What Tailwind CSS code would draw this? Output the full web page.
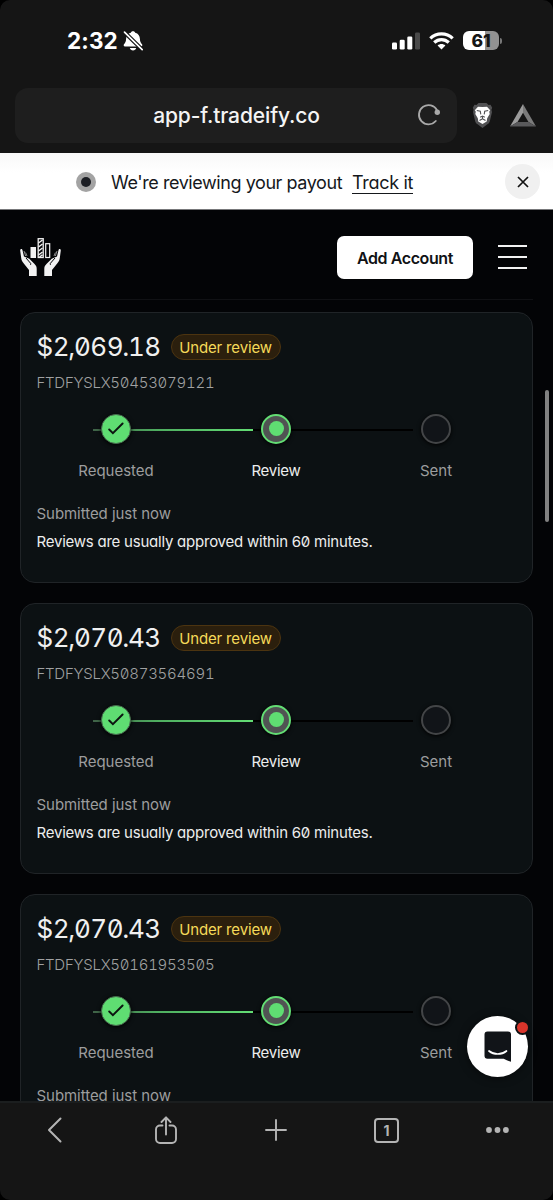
<!DOCTYPE html>
<html lang="en">
<head>
<meta charset="utf-8">
<title>Payouts</title>
<script src="https://cdn.jsdelivr.net/npm/@tailwindcss/browser@4"></script>
</head>
<body class="bg-black">
<div class="w-[553px] h-[1200px] overflow-hidden rounded-[10px] bg-[#030406] flex flex-col relative font-[Inter,sans-serif] text-white whitespace-nowrap">

  <!-- Status bar -->
  <div class="h-[88px] shrink-0 bg-[#151515] flex items-start pt-[26px] pl-[67px] pr-[51px]">
    <span class="text-[22.500px] leading-[30px] font-bold tracking-[0.1px] w-[56px]">2:32</span>
    <svg class="mt-[4px]" width="21" height="22" viewBox="0 0 21 22">
      <path d="M10 1.200c1.300 0 2 .7 2.200 1.500 3 .8 4.600 3.100 4.700 6 .1 3 .9 4 2.100 5.600.8 1.100.1 2.200-.9 2.200H1.900c-1 0-1.700-1.100-.9-2.200 1.200-1.600 2-2.600 2.100-5.600.1-2.900 1.700-5.200 4.700-6C8 1.900 8.700 1.200 10 1.200Z" fill="#fff"/>
      <path d="M6.800 18h6.400c-.4 1.500-1.600 2.400-3.200 2.400S7.200 19.500 6.800 18Z" fill="#fff"/>
      <path d="M1.500 2.200 19.200 19.600" stroke="#151515" stroke-width="4"/>
      <path d="M1.500 2.200 19.200 19.600" stroke="#fff" stroke-width="1.700" stroke-linecap="round"/>
    </svg>
    <div class="ml-auto flex items-center gap-[9px] mt-[5px]">
      <svg width="28" height="18" viewBox="0 0 28 18">
        <rect x="0" y="10.500" width="5" height="7" rx="1.300" fill="#fff"/>
        <rect x="7.700" y="7.800" width="5" height="9.700" rx="1.300" fill="#fff"/>
        <rect x="15.300" y="4.500" width="5" height="13" rx="1.300" fill="#fff"/>
        <rect x="23" y=".5" width="5" height="17" rx="1.300" fill="#4a4a4a"/>
      </svg>
      <svg width="25" height="18" viewBox="0 0 25 18" fill="none" stroke="#fff" stroke-width="3.200">
        <path d="M1.300 6.300C7.500.4 17.500.4 23.700 6.300"/>
        <path d="M5.200 10.500c4.200-3.900 10.400-3.900 14.600 0"/>
        <path d="M12.500 17.600 8.600 13.600c2.200-2 5.600-2 7.800 0Z" fill="#fff" stroke="none"/>
      </svg>
      <div class="flex items-center">
        <div class="w-[36px] h-[19px] rounded-[6px] bg-[linear-gradient(90deg,#fff_61%,#929292_61%)] text-[#151515] text-[17.500px] leading-[19px] font-extrabold text-center tracking-[-0.2px]">61</div>
        <div class="w-[2px] h-[6px] ml-[1px] rounded-r-full bg-[#777]"></div>
      </div>
    </div>
  </div>

  <!-- Address bar -->
  <div class="h-[65px] shrink-0 bg-[#151515] flex items-start pl-[15px]">
    <div class="w-[442px] h-[55px] rounded-[13px] bg-[#1e1e1e] flex items-center relative">
      <span class="w-full text-center text-[21px] leading-[30px] mt-[1px] pl-[1px] font-medium tracking-[-0.12px] text-[#f4f4f4]">app-f.tradeify.co</span>
      <svg class="absolute left-[402px] top-[15px]" width="24" height="24" viewBox="0 0 24 24" fill="none">
        <path d="M20.100 7.300A9.600 9.600 0 1 0 18.800 18" stroke="#a9a9a9" stroke-width="1.800" stroke-linecap="round"/>
        <circle cx="20.300" cy="9.200" r="2.700" fill="#a9a9a9"/>
      </svg>
    </div>
    <svg class="ml-[15px] mt-[14px]" width="21" height="27" viewBox="0 0 21 27">
      <path d="M6.500 1h8l2 2 2-.3 1.700 3-.8 2 .6 2.200-2.100 9c-.4 1.500-1.200 2.500-2.500 3.400L10.500 26l-4.900-3.700c-1.300-.9-2.100-1.900-2.500-3.400L1 9.900l.6-2.200-.8-2 1.700-3 2 .3Z" fill="#515153"/>
      <path d="M6 4.800 10.500 5l4.500-.2 3.200 3.400-1 1.600.5 2.200-2.500 4.200-.5 3.300-4.200 2.600-4.200-2.600-.5-3.300-2.500-4.200.5-2.200-1-1.600Z" fill="#fff"/>
      <path d="m4.800 8.500 3.500.8.500 3M16.200 8.500l-3.500.8-.5 3M8.200 15.200l2.300-1.200 2.300 1.200M10.500 14.200v2.800M7.500 18.500l3-1.800 3 1.800" fill="none" stroke="#515153" stroke-width="1.100"/>
    </svg>
    <svg class="ml-[17px] mt-[16px]" width="26" height="23" viewBox="0 0 26 23">
      <path d="M13 0 0 22.500 7.500 18 13 8.800Z" fill="#9b9b9b"/>
      <path d="M13 0 26 22.500 18.500 18 13 8.800Z" fill="#7b7b7b"/>
      <path d="M0 22.500 7.500 18h11l7.500 4.500Z" fill="#59595b"/>
    </svg>
  </div>

  <!-- Payout banner -->
  <div class="h-[57px] shrink-0 bg-[linear-gradient(180deg,#f8f8f8,#fff_35%)] border-b border-[#77787a] text-[#15181c] flex items-center pl-[76px] pr-[13px]">
    <span class="size-[20px] rounded-full bg-[#a3a3a3] flex items-center justify-center mt-[1px]"><span class="size-[10px] rounded-full bg-[#1b1d23]"></span></span>
    <span class="ml-[15px] w-[231px] text-[18px] leading-[24px] mt-[3px] tracking-[-0.43px]">We're reviewing your payout</span>
    <span class="ml-[10px] text-[18px] leading-[21px] mt-[3px] border-b-[1.500px] border-[#15181c] tracking-[-0.3px]" style="font-feature-settings:'cv11'">Track it</span>
    <span class="ml-auto size-[35px] rounded-full bg-[#f0f0f0] flex items-center justify-center mt-[1px]">
      <svg width="12" height="12" viewBox="0 0 12 12" stroke="#111" stroke-width="1.700"><path d="m1 1 10 10M11 1 1 11"/></svg>
    </span>
  </div>

  <!-- App header -->
  <header class="h-[90px] shrink-0 mx-[20px] border-b border-[#101114] flex items-start pt-[26px]">
    <svg class="mt-[2px]" width="41" height="38" viewBox="0 0 41 38">
      <g fill="#f2f2f2">
        <rect x="10.500" y="9" width="5.500" height="11"/>
        <path d="M.2 12.500c0-2 2-2 2.300-.2L4 18.500l5.300 2.200 5 5c1.600 1.600 2.400 3 2.400 5V38H9v-6L3.800 25.500C2 23.500 1.500 22 1.200 20Z"/>
        <path d="M40.800 12.500c0-2-2-2-2.300-.2L37 18.500l-5.300 2.200-5 5c-1.600 1.600-2.400 3-2.400 5V38H32v-6l5.200-6.500c1.800-2 2.300-3.500 2.600-5.500Z"/>
      </g>
      <g fill="none" stroke="#f2f2f2">
        <rect x="18.200" y=".7" width="5" height="18.800" stroke-width="1.300"/>
        <rect x="25.700" y="5.700" width="4" height="13.800" stroke-width="1.200"/>
        <path d="m18.500 5 4-3M18.500 9l4-3M18.500 13l4-3M18.500 17l4-3M19.500 19l3-2.200" stroke-width="1.500"/>
        <path d="m4 13 1.700 5M5.600 14.500l1.400 3.500M37 13l-1.700 5M35.400 14.500 34 18" stroke-width=".9" stroke="#999"/>
      </g>
      <path d="m6 20 4.500 5.200c.6.8.4 1.600-.5 1.300M35 20l-4.500 5.200c-.6.8-.4 1.600.5 1.300" fill="none" stroke="#030406" stroke-width="1"/>
    </svg>
    <div class="ml-auto w-[136px] h-[43px] rounded-[7px] bg-white text-[#101215] text-[16px] leading-[44px] font-semibold text-center tracking-[-0.4px]" style="font-feature-settings:'cv11'">Add Account</div>
    <div class="ml-[25px] mt-[9px] mr-[6px] w-[29px] flex flex-col gap-[9px]">
      <span class="h-[2px] bg-[#f2f2f2]"></span><span class="h-[2px] bg-[#f2f2f2]"></span><span class="h-[2px] bg-[#f2f2f2]"></span>
    </div>
  </header>

  <!-- Payout cards -->
  <main id="cards" class="flex-1 min-h-0 overflow-hidden mx-[20px] pt-[12px] flex flex-col gap-[20px]"></main>

  <template id="card">
    <section class="h-[271px] shrink-0 rounded-[15px] border border-[#202427] bg-[#0c1113] pl-[15.500px] pt-[17px] flex flex-col items-start">
      <div class="flex items-center h-[34px]">
        <span class="w-[134px] text-[26px] leading-[34px] tracking-[-0.45px] text-[#f0f0f0]" style="font-feature-settings:'tnum','zero'" data-amount></span>
        <span class="w-[110px] h-[26px] rounded-full border border-[#4c3410] bg-[#2b1f0d] text-[#f5da59] text-[15px] leading-[26px] tracking-[-0.15px] text-center">Under review</span>
      </div>
      <div class="mt-[7px] text-[15px] leading-[24px] text-[#a0a1a2] font-light tracking-[-0.25px]" style="font-feature-settings:'tnum','zero'" data-id></div>
      <div class="relative mt-[18.500px] w-[480px] ml-[-0.500px]">
        <div class="absolute left-[57px] top-[15px] w-[320px] h-[2.500px] flex">
          <span class="w-1/2 bg-[linear-gradient(90deg,#3f6247,#4fae60_40%,#63dd74)]"></span>
          <span class="w-1/2 bg-black"></span>
        </div>
        <div class="relative grid grid-cols-3 text-center text-[15px] leading-[22px] text-[#9c9d9e]">
          <div class="flex flex-col items-center">
            <span class="size-[30px] rounded-full border-[1.500px] border-[#47684e] bg-[#5fdd72] shadow-[0_1px_4px_#000] flex items-center justify-center">
              <svg width="16" height="13" viewBox="0 0 16 13" fill="none" stroke="#0c1510" stroke-width="1.900" stroke-linecap="round"><path d="m1.200 7.500 3.700 3.700L14.600 1.500"/></svg>
            </span>
            <span class="mt-[16.500px]">Requested</span>
          </div>
          <div class="flex flex-col items-center">
            <span class="size-[30px] rounded-full border-2 border-[#63dd74] bg-[#505353] shadow-[0_1px_4px_#000] flex items-center justify-center"><span class="size-[15px] rounded-full bg-[#5fdd72]"></span></span>
            <span class="mt-[16.500px] text-[#eceded] tracking-[-0.25px]">Review</span>
          </div>
          <div class="flex flex-col items-center">
            <span class="size-[30px] rounded-full border-2 border-[#434547] bg-[#111418] shadow-[0_1px_4px_#000]"></span>
            <span class="mt-[16.500px]">Sent</span>
          </div>
        </div>
      </div>
      <div class="mt-[20px] text-[15px] leading-[24px] tracking-[-0.05px] text-[#9c9d9e]">Submitted just now</div>
      <div class="mt-[4px] text-[15px] leading-[24px] tracking-[-0.23px] text-[#eceded]" style="font-feature-settings:'cv11','zero'">Reviews are usually approved within 60 minutes.</div>
    </section>
  </template>

  <!-- Browser toolbar -->
  <footer class="h-[99px] shrink-0 bg-[#151515] border-t-2 border-[#1b1e1f]">
    <div class="flex items-center h-[54px] pl-[47px]">
      <svg width="16" height="26" viewBox="0 0 16 26" fill="none" stroke="#b4b4b4" stroke-width="2" stroke-linecap="round" stroke-linejoin="round"><path d="M13.500 1.500 2 13l11.500 11.500"/></svg>
      <svg class="ml-[92px]" width="22" height="28" viewBox="0 0 22 28" fill="none" stroke="#b4b4b4" stroke-width="1.900" stroke-linecap="round" stroke-linejoin="round"><path d="M7.500 9.500H5a4 4 0 0 0-4 4V23a4 4 0 0 0 4 4h12a4 4 0 0 0 4-4v-9.500a4 4 0 0 0-4-4h-2.500M11 18.500V1.500M6.500 6 11 1.300 15.500 6"/></svg>
      <svg class="ml-[88px]" width="22" height="22" viewBox="0 0 22 22" stroke="#b4b4b4" stroke-width="1.900" stroke-linecap="round"><path d="M11 1v20M1 11h20"/></svg>
      <span class="ml-[87px] size-[25px] rounded-[4px] border-2 border-[#b4b4b4] text-[#b4b4b4] text-[14px] leading-[21px] font-bold text-center">1</span>
      <svg class="ml-[87px]" width="23" height="6" viewBox="0 0 23 6" fill="#b4b4b4"><circle cx="3" cy="3" r="2.900"/><circle cx="11.500" cy="3" r="2.900"/><circle cx="19.900" cy="3" r="2.900"/></svg>
    </div>
  </footer>

  <!-- Scroll thumb -->
  <div class="absolute left-[545px] top-[390px] w-[4px] h-[132px] rounded-full bg-[#818181]"></div>

  <!-- Chat launcher -->
  <div class="absolute left-[467px] top-[1016px] size-[61px] rounded-full bg-white shadow-[0_1px_8px_#0008]">
    <svg class="absolute left-[17px] top-[15px]" width="28" height="32" viewBox="0 0 28 32">
      <path d="M3.500.5h20.500a3 3 0 0 1 3 3v27.200c-2.500-.6-5-1.700-7.300-3H3.500a3 3 0 0 1-3-3V3.500a3 3 0 0 1 3-3Z" fill="#111418"/>
      <path d="M5 20c5 4 12.500 4 17.500 0" fill="none" stroke="#fff" stroke-width="1.700" stroke-linecap="round"/>
    </svg>
    <span class="absolute left-[48px] top-[4px] size-[15px] rounded-full bg-[#d9352b] border-2 border-[#0c1113]"></span>
  </div>
</div>
<script>
  const payouts = [
    ["$2,069.18", "FTDFYSLX50453079121"],
    ["$2,070.43", "FTDFYSLX50873564691"],
    ["$2,070.43", "FTDFYSLX50161953505"]
  ];
  const list = document.getElementById("cards");
  const template = document.getElementById("card");
  for (const [amount, id] of payouts) {
    const node = template.content.cloneNode(true);
    // Separators sit tighter than the tabular digits around them.
    node.querySelector("[data-amount]").innerHTML =
      amount.replace(/[.,]/g, '<span class="-mx-[0.900px]">$&</span>');
    node.querySelector("[data-id]").textContent = id;
    list.append(node);
  }
</script>
</body>
</html>
